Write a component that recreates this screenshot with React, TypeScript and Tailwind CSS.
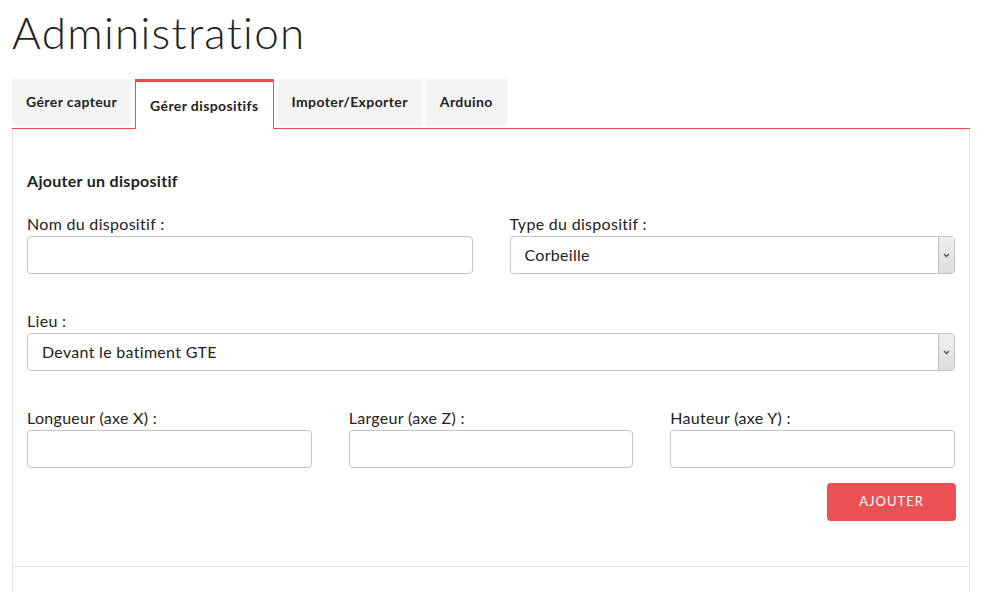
import { useState } from 'react';

const tabs = ['Gérer capteur', 'Gérer dispositifs', 'Impoter/Exporter', 'Arduino'];

function Field({ label }: { label: string }) {
  return (
    <label className="block">
      <div className="mb-[3px] text-[16px] leading-[18px] tracking-[0.3px] text-[#222]">{label}</div>
      <input
        type="text"
        className="h-[38px] w-full rounded-[4px] border border-[#c4c4c4] bg-white px-3 text-[16px] outline-none"
      />
    </label>
  );
}

function Select({ label, value }: { label: string; value: string }) {
  return (
    <label className="block">
      <div className="mb-[3px] text-[16px] leading-[18px] tracking-[0.3px] text-[#222]">{label}</div>
      <div className="relative">
        <select
          defaultValue={value}
          className="h-[38px] w-full appearance-none rounded-[4px] border border-[#c4c4c4] bg-white pl-[14px] text-[16px] tracking-[0.3px] text-[#222] outline-none"
        >
          <option>{value}</option>
        </select>
        <span className="pointer-events-none absolute top-[1px] right-[1px] bottom-[1px] flex w-[16px] items-center justify-center rounded-r-[3px] border-l border-[#bdbdbd] bg-gradient-to-b from-[#f0f0f0] to-[#dcdcdc]">
          <svg width="7" height="5" viewBox="0 0 7 5" fill="none">
            <path d="M1 1l2.5 2.5L6 1" stroke="#555" strokeWidth="1.3" />
          </svg>
        </span>
      </div>
    </label>
  );
}

export default function App() {
  const [active, setActive] = useState(1);

  return (
    <main className="min-h-screen bg-white px-3 font-['Lato',sans-serif] text-[#222]">
      <h1 className="pt-[6px] text-[44px] leading-[52px] font-light tracking-[1.3px] text-[#1e1e1e]">
        Administration
      </h1>

      <div className="mt-[21px] w-[958px]">
        <div className="flex items-end gap-1 border-b border-[#e84c4f]">
          {tabs.map((tab, i) =>
            i === active ? (
              <button
                key={tab}
                type="button"
                onClick={() => setActive(i)}
                className="-mb-px h-[50px] border-x border-t-[3px] border-[#e84c4f] bg-white px-[14px] text-[14px] font-bold tracking-[0.4px] text-[#222]"
              >
                {tab}
              </button>
            ) : (
              <button
                key={tab}
                type="button"
                onClick={() => setActive(i)}
                className="mb-[2px] h-[47px] bg-[#f4f4f4] px-[14px] pb-[2px] text-[14px] font-bold tracking-[0.4px] text-[#222]"
              >
                {tab}
              </button>
            )
          )}
        </div>

        <section className="border-x border-[#e3e3e3]">
          <div className="border-b border-[#e3e3e3] px-[14px] pt-[43px] pb-[45px]">
            <h2 className="text-[16px] leading-[18px] font-bold tracking-[0.3px]">Ajouter un dispositif</h2>

            <div className="mt-[25px] grid grid-cols-2 gap-[37px]">
              <Field label="Nom du dispositif :" />
              <Select label="Type du dispositif :" value="Corbeille" />
            </div>

            <div className="mt-[38px]">
              <Select label="Lieu :" value="Devant le batiment GTE" />
            </div>

            <div className="mt-[38px] grid grid-cols-3 gap-[37px]">
              <Field label="Longueur (axe X) :" />
              <Field label="Largeur (axe Z) :" />
              <Field label="Hauteur (axe Y) :" />
            </div>

            <div className="mt-[15px] flex justify-end">
              <button
                type="button"
                className="mr-[-1px] h-[38px] w-[129px] rounded-[4px] bg-[#e95154] text-[13px] tracking-[1px] text-white uppercase"
              >
                Ajouter
              </button>
            </div>
          </div>
          <div className="h-[40px]" />
        </section>
      </div>
    </main>
  );
}
